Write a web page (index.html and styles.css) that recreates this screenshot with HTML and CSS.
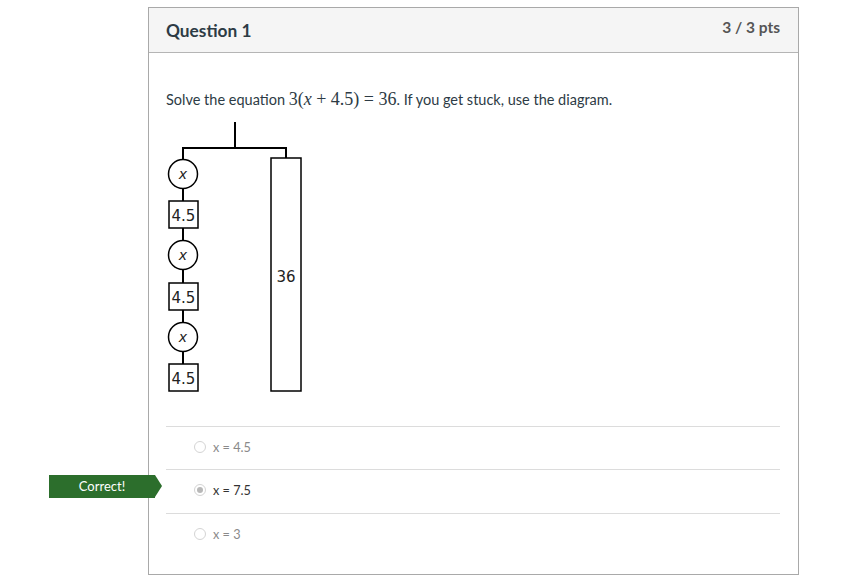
FILE: index.html
```html
<!DOCTYPE html>
<html>
<head>
<meta charset="utf-8">
<link rel="stylesheet" href="styles.css">
</head>
<body>
<div class="card">
  <div class="card-header">
    <h2 class="title">Question 1</h2>
    <div class="pts">3 / 3 pts</div>
  </div>
  <div class="card-body">
    <p class="prompt">Solve the equation <span class="math">3(<i>x</i> + 4.5) = 36</span>. If you get stuck, use the diagram.</p>
    <svg class="diagram" width="140" height="272" viewBox="0 0 140 272">
      <g stroke="#000" stroke-width="2" fill="none">
        <line x1="69" y1="0" x2="69" y2="27"/>
        <line x1="16" y1="26" x2="121" y2="26"/>
        <line x1="17" y1="26" x2="17" y2="242"/>
        <line x1="120" y1="26" x2="120" y2="36"/>
      </g>
      <g stroke="#000" stroke-width="1.5" fill="#fff">
        <rect x="105" y="36" width="30" height="233"/>
        <circle cx="17" cy="52" r="14.5"/>
        <rect x="3" y="79" width="29" height="27"/>
        <circle cx="17" cy="133" r="14.5"/>
        <rect x="3" y="161" width="29" height="27"/>
        <circle cx="17" cy="215" r="14.5"/>
        <rect x="3" y="242" width="29" height="27"/>
      </g>
      <g class="dtext" text-anchor="middle">
        <text x="17" y="57" class="var">x</text>
        <text x="17.5" y="98.5">4.5</text>
        <text x="17" y="138" class="var">x</text>
        <text x="17.5" y="180.5">4.5</text>
        <text x="17" y="220" class="var">x</text>
        <text x="17.5" y="261.5">4.5</text>
        <text x="120" y="160">36</text>
      </g>
    </svg>
    <div class="answers">
      <div class="answer">
        <span class="radio"></span><span class="label">x = 4.5</span>
      </div>
      <div class="answer selected">
        <span class="badge">Correct!</span>
        <span class="radio"></span><span class="label">x = 7.5</span>
      </div>
      <div class="answer last">
        <span class="radio"></span><span class="label">x = 3</span>
      </div>
    </div>
  </div>
</div>
</body>
</html>
```
FILE: styles.css
```css
html, body {
  margin: 0;
  padding: 0;
  background: #fff;
}
body {
  font-family: Lato, "Liberation Sans", sans-serif;
  color: #2d3b45;
  padding-top: 7px;
}
.card {
  margin-left: 148px;
  width: 651px;
  height: 568px;
  box-sizing: border-box;
  border: 1px solid #a9a9a9;
  background: #fff;
}
.card-header {
  height: 45px;
  box-sizing: border-box;
  background: #f5f5f5;
  border-bottom: 1px solid #b5b5b5;
  display: flex;
  justify-content: space-between;
  padding: 0 18px 0 17px;
}
.title {
  margin: 0;
  font-size: 17.3px;
  font-weight: 700;
  color: #2d3b45;
  line-height: 20px;
  padding-top: 13px;
}
.pts {
  font-size: 15.5px;
  font-weight: 700;
  color: #555;
  line-height: 18px;
  padding-top: 10px;
}
.card-body {
  padding: 0 18px 0 17px;
}
.prompt {
  margin: 36px 0 0 0;
  font-size: 14.5px;
  line-height: 20px;
  color: #2d3b45;
}
.math {
  font-family: "Liberation Serif", "DejaVu Serif", serif;
  font-size: 18px;
}
.math i {
  font-style: italic;
}
.diagram {
  display: block;
  margin-top: 12px;
}
.dtext text {
  font-family: "DejaVu Sans", sans-serif;
  font-size: 15px;
  fill: #222;
}
.dtext text.var {
  font-style: italic;
  font-size: 14px;
}
.answers {
  margin-top: 32px;
}
.answer {
  position: relative;
  height: 43px;
  border-top: 1px solid #dcdcdc;
  display: flex;
  align-items: center;
  padding-left: 28px;
  padding-bottom: 3px;
  box-sizing: border-box;
}
.answer.selected {
  height: 44px;
}
.answer.last {
  height: 44px;
}
.radio {
  width: 10px;
  height: 10px;
  border: 1px solid #d4d4d4;
  border-radius: 50%;
  box-sizing: content-box;
  margin-right: 7px;
  background: #fff;
  position: relative;
}
.selected .radio::after {
  content: "";
  position: absolute;
  left: 2px;
  top: 2px;
  width: 6px;
  height: 6px;
  border-radius: 50%;
  background: #b8b8b8;
}
.label {
  font-size: 12.7px;
  color: #8a8a8a;
}
.selected .label {
  color: #333;
}
.badge {
  position: absolute;
  left: -117px;
  top: 5px;
  width: 106px;
  height: 23px;
  background: #2c6e2c;
  color: #fff;
  font-size: 13px;
  line-height: 23px;
  text-align: center;
}
.badge::after {
  content: "";
  position: absolute;
  right: -7px;
  top: 0;
  border-top: 11.5px solid transparent;
  border-bottom: 11.5px solid transparent;
  border-left: 7px solid #2c6e2c;
}
```
